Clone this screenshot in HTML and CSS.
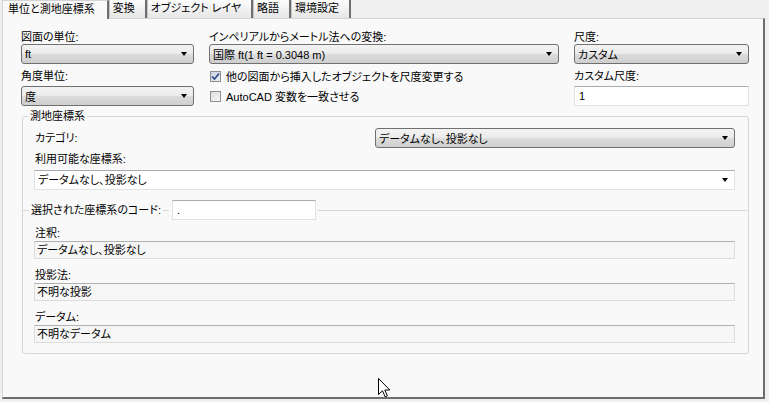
FILE: index.html
```html
<!DOCTYPE html>
<html lang="ja">

<head>
  <meta charset="UTF-8" />
  <title>単位と測地座標系</title>
  <link rel="stylesheet" href="styles.css">
</head>

<body>
  <div class="window">
    <div class="tabs">
      <div class="tab active">単位と測地座標系</div>
      <div class="tab">変換</div>
      <div class="tab">オブジェクト レイヤ</div>
      <div class="tab">略語</div>
      <div class="tab">環境設定</div>
    </div>

    <div class="panel">
      <div class="top-grid">
        <div class="col">
          <div class="lbl">図面の単位:</div>
          <div class="combo"><span>ft</span></div>
          <div class="lbl next">角度単位:</div>
          <div class="combo"><span>度</span></div>
        </div>

        <div class="col">
          <div class="lbl">インペリアルからメートル法への変換:</div>
          <div class="combo"><span>国際 ft(1 ft = 0.3048 m)</span></div>
          <div class="check first">
            <span class="box checked">
              <svg width="9" height="9" viewBox="0 0 9 9">
                <path d="M1 4.5 L3.5 7 L8 1.5" fill="none" stroke="#34488a" stroke-width="1.7" />
              </svg>
            </span>
            他の図面から挿入したオブジェクトを尺度変更する
          </div>
          <div class="check">
            <span class="box"></span>
            AutoCAD 変数を一致させる
          </div>
        </div>

        <div class="col">
          <div class="lbl">尺度:</div>
          <div class="combo"><span>カスタム</span></div>
          <div class="lbl next">カスタム尺度:</div>
          <div class="textbox">1</div>
        </div>
      </div>

      <fieldset class="group">
        <legend>測地座標系</legend>

        <div class="cat-row">
          <span class="lbl">カテゴリ:</span>
          <div class="combo cat"><span>データムなし、投影なし</span></div>
        </div>

        <div class="lbl avail">利用可能な座標系:</div>
        <div class="textbox drop"><span>データムなし、投影なし</span></div>

        <div class="code-row">
          <span class="rule short"></span>
          <span class="lbl">選択された座標系のコード:</span>
          <span class="rule short"></span>
          <div class="textbox code">.</div>
          <span class="rule"></span>
        </div>

        <div class="lbl info">注釈:</div>
        <div class="readonly">データムなし、投影なし</div>
        <div class="lbl info">投影法:</div>
        <div class="readonly">不明な投影</div>
        <div class="lbl info">データム:</div>
        <div class="readonly">不明なデータム</div>
      </fieldset>

      <svg class="cursor" width="13" height="20" viewBox="0 0 13 20">
        <path d="M0.5 0.5 V16.5 L4.5 12.8 L7.2 18.8 L9.4 17.8 L6.8 12 H11.8 Z" fill="#fff" stroke="#000" stroke-width="1" />
      </svg>
    </div>
  </div>
</body>

</html>
```

FILE: styles.css
```css
* {
  box-sizing: border-box;
}

body {
  margin: 0;
  background: #f0f0f0;
  font-family: 'Liberation Sans', 'Noto Sans CJK JP', sans-serif;
  font-size: 11px;
  font-feature-settings: "palt";
  color: #000;
}

.window {
  width: 769px;
  height: 402px;
}

/* Tabs */
.tabs {
  display: flex;
  height: 18px;
  padding-left: 2px;
}

.tab {
  height: 18px;
  line-height: 17px;
  padding: 0 10px 0 3px;
  background: linear-gradient(#fdfdfd, #e6e6e6);
  border-left: 1px solid #c4c4c4;
  border-right: 2px solid #6f6f6f;
  white-space: nowrap;
}

.tab.active {
  padding: 0 12px 0 5px;
  background: #f9f9f9;
  border-left: 1px solid #d4d4d4;
  border-top: 1px solid #d4d4d4;
  line-height: 16px;
  position: relative;
  z-index: 1;
  height: 19px;
}

/* Panel */
.panel {
  position: relative;
  margin-left: 2px;
  width: 763px;
  height: 381px;
  background: #f9f9f9;
  border-left: 1px solid #d4d4d4;
  border-top: 1px solid #d4d4d4;
  border-right: 2px solid #6e6e6e;
  border-bottom: 2px solid #6e6e6e;
}

.top-grid {
  display: grid;
  grid-template-columns: 173px 350px 175px;
  column-gap: 15px;
  padding: 11px 0 0 18px;
}

.col {
  display: flex;
  flex-direction: column;
}

.lbl {
  height: 14px;
  line-height: 14px;
  white-space: nowrap;
}

.lbl.next {
  margin-top: 5px;
  margin-bottom: 3px;
}

/* Controls */
.combo {
  display: flex;
  align-items: center;
  justify-content: space-between;
  height: 20px;
  padding: 0 6px 0 3px;
  border: 1px solid #707070;
  border-radius: 3px;
  background: linear-gradient(#f3f3f3 0%, #ebebeb 48%, #dcdcdc 52%, #cfcfcf 100%);
  white-space: nowrap;
}

.combo::after,
.drop::after {
  content: "";
  border-left: 3.5px solid transparent;
  border-right: 3.5px solid transparent;
  border-top: 4px solid #000;
}

.textbox {
  height: 20px;
  line-height: 18px;
  padding: 0 4px;
  background: #fff;
  border: 1px solid #dfe3e8;
  border-top-color: #a9abb0;
}

.drop {
  display: flex;
  align-items: center;
  justify-content: space-between;
  padding: 0 6px 0 3px;
}

.check {
  display: flex;
  align-items: center;
  gap: 5px;
  height: 14px;
  margin-top: 6px;
  padding-left: 1px;
  white-space: nowrap;
}

.check.first {
  margin-top: 5px;
}

.box {
  display: flex;
  align-items: center;
  justify-content: center;
  width: 11px;
  height: 11px;
  border: 1px solid #8f8f8f;
  background: linear-gradient(135deg, #dcdcdc, #f8f8f8);
}

.box.checked {
  background: linear-gradient(135deg, #c9d1e2, #eef1f7);
}

/* Group box */
.group {
  margin: 3px 0 0 19px;
  width: 727px;
  padding: 0 13px 10px 11px;
  border: 1px solid #d6d6d6;
  border-radius: 3px;
}

.group legend {
  margin-left: -6px;
  padding: 0 2px;
  height: 14px;
  line-height: 14px;
}

.cat-row {
  display: flex;
  align-items: center;
  justify-content: space-between;
  margin-top: 5px;
  padding-left: 1px;
}

.combo.cat {
  width: 360px;
}

.lbl.avail {
  margin: 4px 0 4px 1px;
}

.code-row {
  display: flex;
  align-items: center;
  gap: 2px;
  height: 20px;
  margin: 10px -12px 0 -11px;
}

.rule {
  flex: 1;
  height: 1px;
  background: #d6d6d6;
}

.rule.short {
  flex: none;
  width: 6px;
}

.textbox.code {
  width: 144px;
  margin-left: 1px;
}

.lbl.info {
  margin: 6px 0 1px 1px;
}

.lbl.info ~ .lbl.info {
  margin-top: 9px;
}

.readonly {
  height: 18px;
  line-height: 16px;
  padding: 0 2px;
  background: #f6f6f6;
  border: 1px solid #dcdcdc;
  border-top-color: #b0b0b0;
  white-space: nowrap;
}

/* Mouse pointer in the capture */
.cursor {
  position: absolute;
  left: 375px;
  top: 359px;
}
```
